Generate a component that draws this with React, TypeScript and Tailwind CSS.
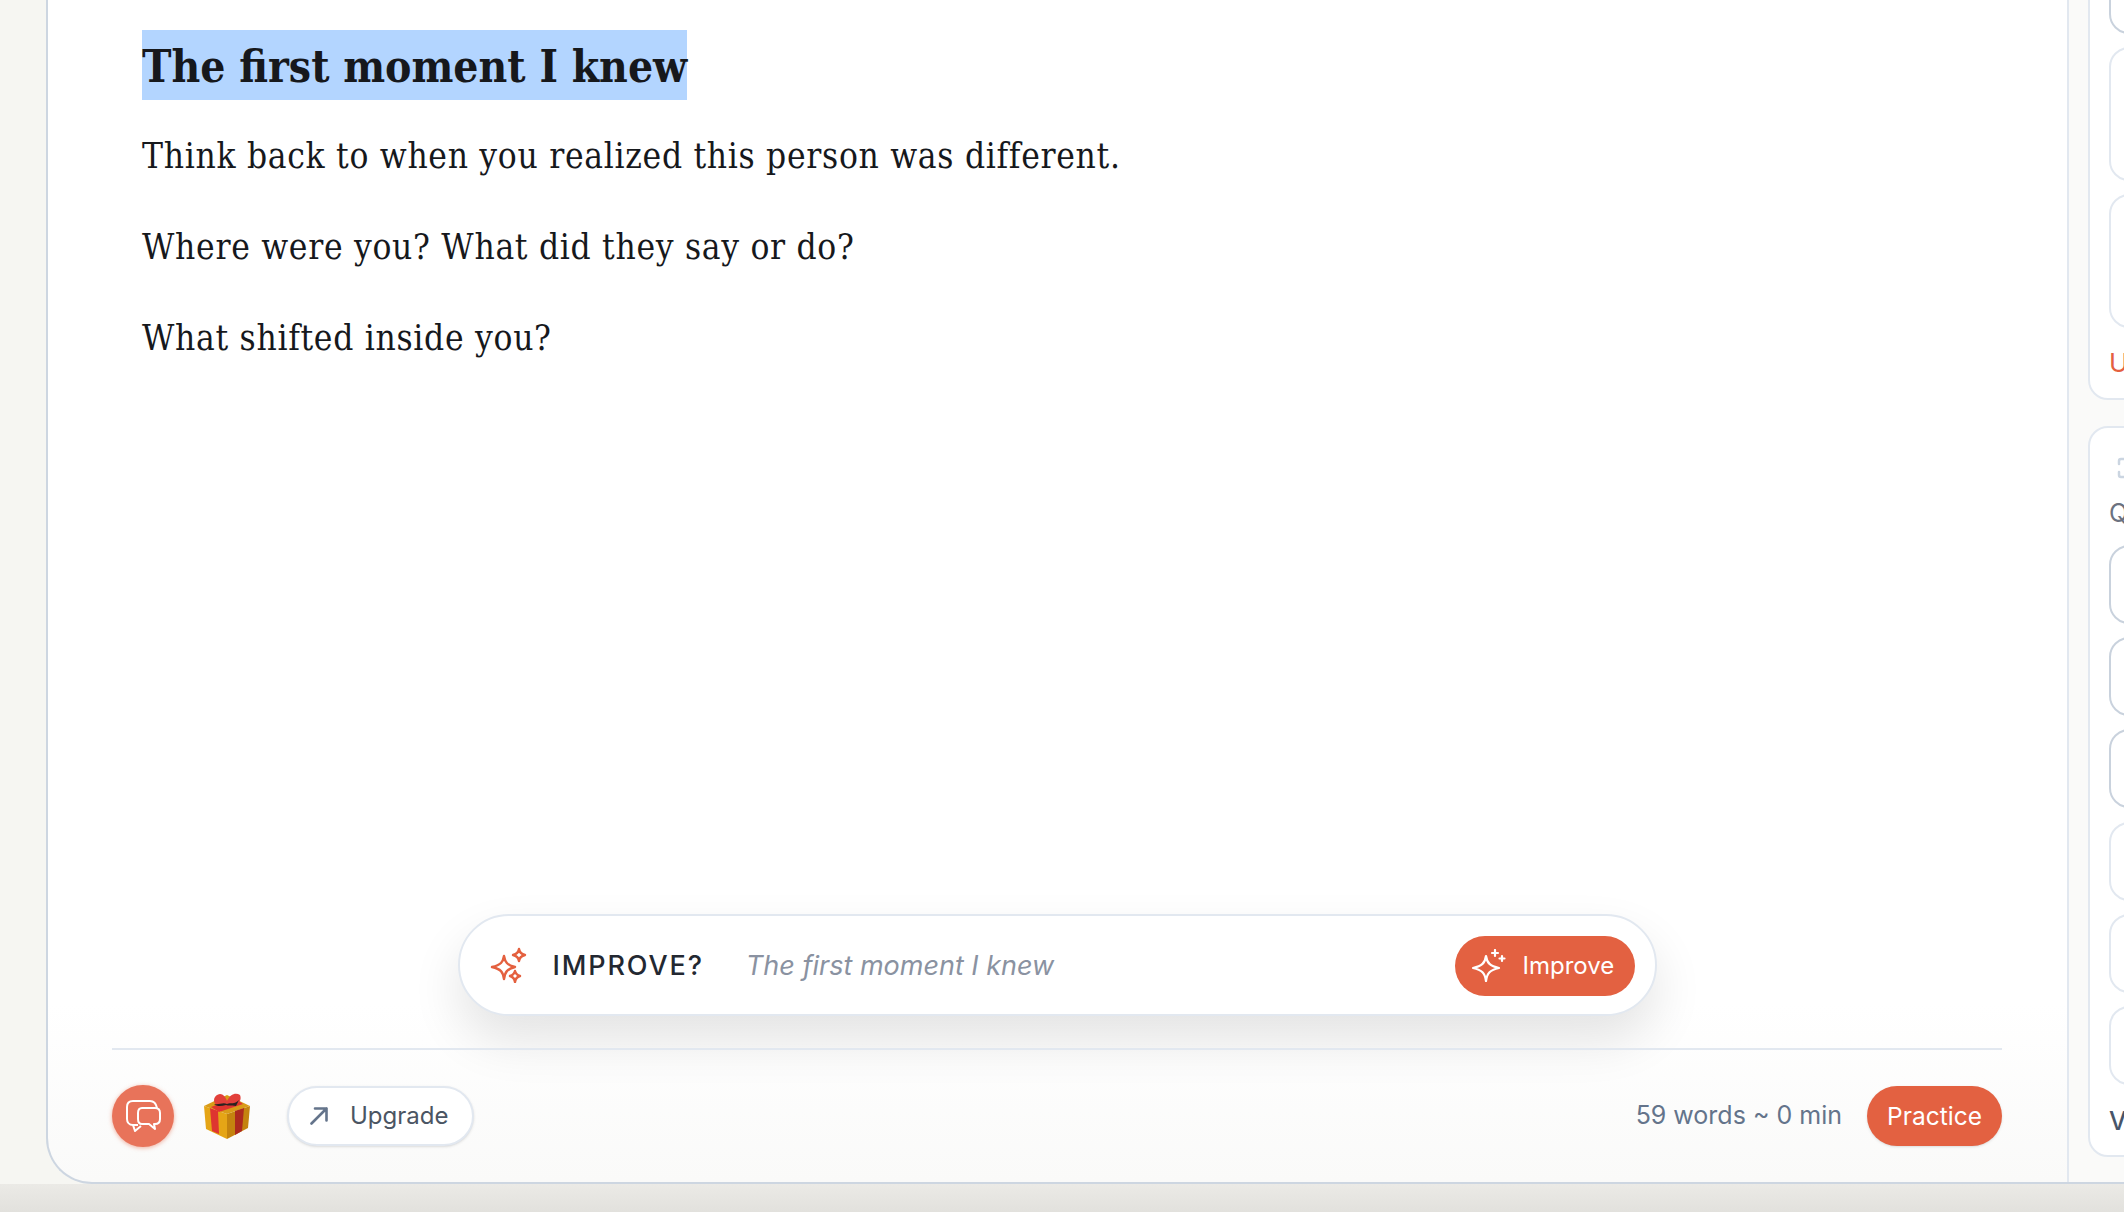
import { Maximize } from "lucide-react";

const topBoxes = [
  { id: 1, cls: "h-[134px] border-[#e2e8f0]" },
  { id: 2, cls: "h-[134px] border-[#e2e8f0]" },
];

const quickBoxes = [
  { id: 1, cls: "border-[#c9d2dd]" },
  { id: 2, cls: "border-[#c9d2dd]" },
  { id: 3, cls: "border-[#c9d2dd]" },
  { id: 4, cls: "border-[#e2e8f0]" },
  { id: 5, cls: "border-[#e2e8f0]" },
  { id: 6, cls: "border-[#e2e8f0]" },
];

function SparklesIcon() {
  return (
    <svg width="37" height="36" viewBox="0 0 37 36" fill="none" stroke="#e4603f" strokeWidth="2.4" strokeLinejoin="round">
      <path d="M14 9 C15 15 17 18 25 20 C17 22 15 25 14 32 C13 25 11 22 2 20 C11 18 13 15 14 9 Z" />
      <path d="M29 2 C29.5 5.500 31 7 35 8 C31 9 29.500 10.500 29 14 C28.500 10.500 27 9 23 8 C27 7 28.500 5.500 29 2 Z" />
      <path d="M25 24 C25.500 26.500 27 28 30 29 C27 30 25.500 31.500 25 35 C24.500 31.500 23 30 20 29 C23 28 24.500 26.500 25 24 Z" />
    </svg>
  );
}

function ButtonSparkle() {
  return (
    <svg width="34" height="34" viewBox="0 0 34 34" fill="none" stroke="#ffffff" strokeWidth="2.2" strokeLinejoin="round" strokeLinecap="round">
      <path d="M14 7 C15 14 18 17 27 19 C18 21 15 24 14 32 C13 24 10 21 1 19 C10 17 13 14 14 7 Z" />
      <path d="M23 1 V7 M20 4 H26" />
      <path d="M30 7 V12 M27.500 9.500 H32.500" />
    </svg>
  );
}

function ChatIcon() {
  return (
    <svg width="35" height="32" viewBox="0 0 35 32" fill="none" stroke="#ffffff" strokeWidth="2" strokeLinejoin="round">
      <path d="M12 25 H7 C3 25 1 22 1 19 V7 C1 3 3 1 7 1 H24 C28 1 30 3 31 8" />
      <path d="M7 25 L9 31 L15 26" />
      <path d="M16 8 H29 C32 8 34 10 34 13 V19 C34 22 32 24 29 24 H28 L29 29 L23 24 H16 C13 24 12 22 12 19 V13 C12 10 13 8 16 8 Z" />
    </svg>
  );
}

function ArrowIcon() {
  return (
    <svg width="18" height="18" viewBox="0 0 18 18" fill="none" stroke="#64748b" strokeWidth="2.6" strokeLinecap="round" strokeLinejoin="round">
      <path d="M1.500 16.500 L16.500 1.500 M5 1.500 H16.500 V13.500" />
    </svg>
  );
}

function GiftIcon() {
  return (
    <svg width="48" height="48" viewBox="0 0 48 48">
      <path d="M1 14 L24 22 V47 L3 37 Z" fill="#e5a516" />
      <path d="M24 22 L47 14 L45 36 L24 47 Z" fill="#c4830f" />
      <path d="M1 14 L24 3 L47 14 L24 22 Z" fill="#d99c18" />
      <path d="M7 16 L15 19 L16 42 L9 39 Z" fill="#de3530" />
      <path d="M32 19 L41 16 L39 39 L32 43 Z" fill="#ad2a1e" />
      <path d="M8 15 L32 6 L40 12 L16 20 Z" fill="#e0352f" />
      <path d="M12 5 C17 -1 22 3 24 9 C27 2 33 0 37 3 C39 8 36 12 30 13 L24 12 L15 14 C11 12 10 8 12 5 Z" fill="#e2403a" />
      <path d="M11 12 C16 13 20 10 24 12 C28 10 31 13 36 8 L33 14 C28 13 25 14 23 13 C19 14 14 15 11 12 Z" fill="#2b2320" />
    </svg>
  );
}

export default function App() {
  return (
    <div className="flex h-[1212px] w-[2124px] flex-col overflow-hidden bg-[#f6f6f2] font-['Inter',sans-serif]">
      <div className="ml-[46px] flex h-[1184px] shrink-0 overflow-hidden rounded-bl-[46px] border-b-2 border-l-2 border-[#cdd6e1] bg-gradient-to-b from-white from-85% to-[#fafaf9]">
        {/* Editor */}
        <div className="flex min-w-0 flex-1 flex-col pl-[64px] pr-[65px]">
          <div className="flex-1 pl-[30px] pt-[30px] font-['DejaVu_Serif_Condensed','DejaVu_Serif',serif] text-[#16181c]">
            <h1 className="mb-[34px] h-[70px] w-fit bg-[#b3d5ff] text-[44px] font-bold leading-[74px]">
              The first moment I knew
            </h1>
            <p className="mb-[46px] text-[35px] leading-[45px] tracking-[0.7px]">
              Think back to when you realized this person was different.
            </p>
            <p className="mb-[46px] text-[35px] leading-[45px] tracking-[0.7px]">
              Where were you? What did they say or do?
            </p>
            <p className="text-[35px] leading-[45px] tracking-[0.7px]">What shifted inside you?</p>
          </div>

          {/* Improve bar */}
          <div className="mx-auto mb-[32px] flex h-[102px] w-[1199px] items-center rounded-full border-2 border-[#e2e8f0] bg-white pl-[30px] pr-[20px] shadow-[0_24px_50px_rgba(0,0,0,0.11)]">
            <SparklesIcon />
            <span className="ml-[26px] pt-[2px] text-[27px] font-medium tracking-[0.07em] text-[#232831]">IMPROVE?</span>
            <span className="ml-[42px] flex-1 pt-[2px] text-[27px] italic text-[#8a92a1]">The first moment I knew</span>
            <button className="mt-[2px] flex h-[60px] w-[180px] items-center rounded-full bg-[#e36141] pl-[17px] text-[24px] text-white">
              <ButtonSparkle />
              <span className="ml-[17px]">Improve</span>
            </button>
          </div>

          <div className="h-[2px] bg-[#e2e8f0]" />

          {/* Footer */}
          <div className="flex h-[132px] items-start justify-between pt-[35px]">
            <div className="flex h-[62px] items-center">
              <button className="flex h-[62px] w-[62px] items-center justify-center rounded-full bg-[#e8735a] shadow-[0_1px_4px_rgba(227,97,65,0.5)]">
                <ChatIcon />
              </button>
              <span className="ml-[29px]">
                <GiftIcon />
              </span>
              <button className="ml-[36px] flex h-[60px] w-[187px] items-center rounded-full border-2 border-[#e2e8f0] bg-white pl-[21px] text-[24px] text-[#4b5563] shadow-sm">
                <ArrowIcon />
                <span className="ml-[22px]">Upgrade</span>
              </button>
            </div>
            <div className="flex h-[62px] items-center">
              <span className="text-[25px] text-[#64748b]">59 words ~ 0 min</span>
              <button className="ml-[25px] h-[60px] w-[135px] rounded-full bg-[#e36141] text-[24.500px] text-white shadow-sm">
                Practice
              </button>
            </div>
          </div>
        </div>

        {/* Right sidebar, mostly cut off */}
        <aside className="w-[57px] shrink-0 border-l-2 border-[#e2e8f0] bg-[#fafaf9] pl-[19px]">
          <div className="-mt-[100px] h-[500px] w-[200px] rounded-[20px] border-2 border-[#e2e8f0] bg-white pl-[19px] pt-[14px]">
            <div className="h-[118px] rounded-[20px] border-2 border-[#c9d2dd]" />
            {topBoxes.map((box) => (
              <div key={box.id} className={`mt-[13px] rounded-[20px] border-2 ${box.cls}`} />
            ))}
            <p className="mt-[18px] text-[26px] leading-[34px] text-[#e4603f]">Upgrade</p>
          </div>
          <div className="mt-[26px] h-[731px] w-[200px] rounded-[20px] border-2 border-[#e2e8f0] bg-white pl-[19px] pt-[28px]">
            <div className="ml-[7px] h-[24px] w-[24px] text-[#cbd5e1]">
              <Maximize size={24} strokeWidth={2.5} />
            </div>
            <p className="mt-[16px] text-[25px] leading-[34px] text-[#6b7280]">Quick</p>
            <div className="mt-[15px] flex flex-col gap-[13.200px]">
              {quickBoxes.map((box) => (
                <div key={box.id} className={`h-[79px] rounded-[20px] border-2 ${box.cls}`} />
              ))}
            </div>
            <p className="mt-[19px] text-[25px] font-medium leading-[34px] text-[#475569]">View</p>
          </div>
        </aside>
      </div>
      <div className="flex-1 bg-gradient-to-b from-[#ebeae6] to-[#e2e1dd]" />
    </div>
  );
}
